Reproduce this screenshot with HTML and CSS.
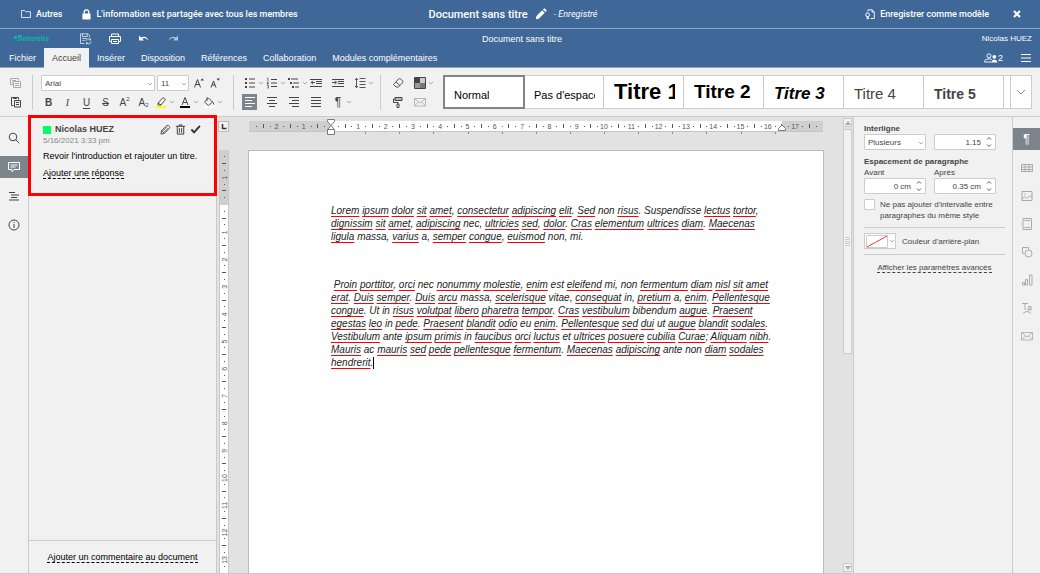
FILE: index.html
```html
<!DOCTYPE html>
<html lang="fr">
<head>
  <meta charset="UTF-8" />
  <meta name="viewport" content="width=device-width, initial-scale=1.0" />
  <title>Document sans titre</title>
  <link rel="stylesheet" href="styles.css">
</head>
<body>
  <!-- Icônes réutilisées -->
  <svg width="0" height="0" class="sprite" aria-hidden="true">
    <symbol id="caret" viewBox="0 0 6 6"><path d="M1 2l2 2 2-2" fill="none" stroke="#999" stroke-width="0.8"/></symbol>
    <symbol id="mail" viewBox="0 0 12 12"><path d="M.5 2.500h11v7.500H.5zM.5 2.500L6 7l5.500-4.500M.5 10l4-4.200M11.500 10l-4-4.200" fill="none" stroke="currentColor" stroke-width="0.8"/></symbol>
    <symbol id="spin" viewBox="0 0 6 12"><path d="M1 3.500L3 1.500l2 2M1 8.500l2 2 2-2" fill="none" stroke="#444" stroke-width="0.9"/></symbol>
  </svg>

  <!-- Barre de l'application -->
  <header class="topbar">
    <div class="topbar-left">
      <a href="#" class="top-link">
        <svg width="10" height="10" viewBox="0 0 10 10"><path d="M.5 8.500v-7h3l1 1.200h5v5.800z" fill="none" stroke="#fff" stroke-width="0.8"/></svg>
        Autres
      </a>
      <span class="top-info">
        <svg width="9" height="11" viewBox="0 0 9 11"><path d="M2.200 5V3.200a2.300 2.300 0 0 1 4.600 0V5" fill="none" stroke="#fff" stroke-width="1.300"/><rect x=".4" y="4.600" width="8.200" height="6" rx=".8" fill="#fff"/></svg>
        L'information est partagée avec tous les membres
      </span>
    </div>
    <div class="topbar-title">
      <h1>Document sans titre</h1>
      <button type="button" aria-label="Renommer">
        <svg width="12" height="12" viewBox="0 0 12 12"><path d="M.8 11.200l.5-3L7.200 2.300l2.500 2.500-5.900 5.900zM8 1.500l.9-.9q.5-.4 1 0l1.500 1.500q.4.500 0 1l-.9.900z" fill="#fff"/></svg>
      </button>
      <em>- Enregistré</em>
    </div>
    <div class="topbar-right">
      <button type="button" class="save-model">
        <svg width="10" height="11" viewBox="0 0 10 11"><path d="M3 2.500V.8h4L9.300 3v6.500H5.500M7 .8V3h2.300" fill="none" stroke="#fff" stroke-width="0.9"/><circle cx="2.600" cy="5.800" r="1.900" fill="none" stroke="#fff"/><path d="M1.700 7.500v3l1-.7 1 .7v-3" fill="#fff"/></svg>
        Enregistrer comme modèle
      </button>
      <button type="button" class="close" aria-label="Fermer">
        <svg width="8" height="8" viewBox="0 0 8 8"><path d="M1 1l6 6M7 1L1 7" stroke="#fff" stroke-width="2.100"/></svg>
      </button>
    </div>
  </header>

  <!-- En-tête de l'éditeur -->
  <div class="doc-header">
    <div class="doc-actions">
      <span class="logo">
        <svg width="9" height="8" viewBox="0 0 9 8"><path d="M0 3h2v3H0zM2 5h3v2H2z" fill="#1479b8"/><path d="M2 1h3v3H2zM6 0h3v3H6zM6 4h2v2H6z" fill="#12b3a4"/></svg>
        interstis
      </span>
      <button type="button" aria-label="Enregistrer">
        <svg width="12" height="12" viewBox="0 0 12 12" fill="none" stroke="#d4deea" stroke-width="0.9"><path d="M4.500 10.500h-4V.8h7.300l1.700 1.700v2M2.500.8v2.700h4.800V.8M2.500 5.500h4M2.500 7.500h2"/><path d="M6 8a2.300 2.300 0 0 1 4.300-1M11 8.500a2.300 2.300 0 0 1-4.300 1.200M10.500 5.300V7H9M6.500 11.500V9.800H8"/></svg>
      </button>
      <button type="button" aria-label="Imprimer">
        <svg width="12" height="12" viewBox="0 0 12 12" fill="none" stroke="#fff"><path d="M2.500 3.500v-2.500h7v2.500M2.500 8.500h-2v-5h11v5h-2"/><path d="M2.500 6.500h7v4h-7zM4 8.500h4"/></svg>
      </button>
      <button type="button" aria-label="Annuler">
        <svg width="12" height="12" viewBox="0 0 12 12"><path d="M1 2.500v5h5L4.200 5.700q3.300-2 6.300 2Q8.700 2.300 3 4.500z" fill="#fff"/></svg>
      </button>
      <button type="button" aria-label="Rétablir" class="dim">
        <svg width="12" height="12" viewBox="0 0 12 12"><path d="M11 2.500v5H6l1.800-1.800q-3.300-2-6.300 2Q3.300 2.300 9 4.500z" fill="#fff"/></svg>
      </button>
    </div>
    <div class="doc-name">Document sans titre</div>
    <div class="doc-user">Nicolas HUEZ</div>
  </div>

  <!-- Onglets -->
  <nav class="tabs">
    <button type="button">Fichier</button>
    <button type="button" class="active">Accueil</button>
    <button type="button">Insérer</button>
    <button type="button">Disposition</button>
    <button type="button">Références</button>
    <button type="button">Collaboration</button>
    <button type="button">Modules complémentaires</button>
    <div class="tabs-right">
      <button type="button" class="users">
        <svg width="14" height="10" viewBox="0 0 14 10"><circle cx="5" cy="2.800" r="2" fill="none" stroke="#fff" stroke-width="0.9"/><path d="M.5 9c0-2.500 2-3 4.500-3 1 0 2 .1 2.800.5M.5 9H8" fill="none" stroke="#fff" stroke-width="0.9"/><circle cx="10.300" cy="3.800" r="1.900" fill="#fff"/><path d="M7.800 9.400Q8 6.400 10.300 6.400T13.500 9.400z" fill="#fff"/></svg>2
      </button>
      <button type="button" class="menu" aria-label="Menu">
        <svg width="10" height="8" viewBox="0 0 10 8"><path d="M0 .5h10M0 4h10M0 7.500h10" stroke="#fff"/></svg>
      </button>
    </div>
  </nav>

  <!-- Barre d'outils -->
  <div class="toolbar">
    <div class="tool-group copy-group">
      <div class="tool-row"><button type="button" aria-label="Copier" class="disabled"><svg width="12" height="12" viewBox="0 0 12 12" fill="none" stroke="currentColor"><path d="M3.500 7.500h-3v-6h8v2M2 3.500h4M2 5.500h1"/><path d="M3.500 4.500h7v6h-7zM5 6.500h4M5 8.500h4"/></svg></button></div>
      <div class="tool-row"><button type="button" aria-label="Coller"><svg width="12" height="12" viewBox="0 0 12 12" fill="none" stroke="currentColor"><path d="M3.500 9.500h-2v-8h7v2M3.500 1.500v1h3v-1"/><path d="M4.500 4.500h6v6.500h-6zM6 6.500h3M6 8.500h3"/></svg></button></div>
    </div>

    <div class="tool-group font-group">
      <div class="tool-row font-row">
        <span class="combo font-name"><select aria-label="Police"><option>Arial</option></select><svg width="6" height="6"><use href="#caret"/></svg></span>
        <span class="combo font-size"><select aria-label="Taille"><option>11</option></select><svg width="6" height="6"><use href="#caret"/></svg></span>
        <button type="button" aria-label="Augmenter la taille"><svg width="12" height="12" viewBox="0 0 12 12" fill="none" stroke="currentColor"><path d="M1.500 10.500l3-8 3 8M2.500 7.500h4"/><path d="M7.500 3.500L9.200 1.200 11 3.500z" fill="currentColor" stroke="none"/></svg></button>
        <button type="button" aria-label="Réduire la taille"><svg width="12" height="12" viewBox="0 0 12 12" fill="none" stroke="currentColor"><path d="M2 10.500l2.500-6.500L7 10.500M3 8h3"/><path d="M7.500 1.500l1.700 2.200L11 1.500z" fill="currentColor" stroke="none"/></svg></button>
      </div>
      <div class="tool-row style-row">
        <button type="button" class="bold">B</button>
        <button type="button" class="italic">I</button>
        <button type="button" class="under">U</button>
        <button type="button" class="strike">S</button>
        <button type="button">A<sup>2</sup></button>
        <button type="button">A<sub>2</sub></button>
        <button type="button" class="split" aria-label="Surlignage"><svg width="12" height="12" viewBox="0 0 12 12"><path d="M3 7l5-5.500 2.500 2L6 9H3zM3 7l3 2" fill="none" stroke="#444" stroke-width="0.9"/><path d="M1 10h10v2H1z" fill="#ff0"/></svg><svg width="6" height="6"><use href="#caret"/></svg></button>
        <button type="button" class="split" aria-label="Couleur du texte"><svg width="12" height="12" viewBox="0 0 12 12"><path d="M3 9l3-7.500L9 9M4 6.500h4" fill="none" stroke="#444"/><path d="M1 10h10v2H1z"/></svg><svg width="6" height="6"><use href="#caret"/></svg></button>
        <button type="button" class="split" aria-label="Couleur de fond"><svg width="12" height="12" viewBox="0 0 12 12"><path d="M1.500 6l4-4L9.500 6l-4 3.500zM4 1v4M9.500 5.500l1.500 3" fill="none" stroke="#444" stroke-width="0.9"/><path d="M1 10h10v2H1z" fill="#fff"/></svg><svg width="6" height="6"><use href="#caret"/></svg></button>
      </div>
    </div>

    <div class="tool-group para-group">
      <div class="tool-row">
        <button type="button" class="split" aria-label="Puces"><svg width="12" height="12" viewBox="0 0 12 12"><path d="M1 1h2v2H1zM1 5h2v2H1zM1 9h2v2H1z" fill="#444"/><path d="M5 2h6M5 6h6M5 10h6" stroke="#444"/></svg><svg width="6" height="6"><use href="#caret"/></svg></button>
        <button type="button" class="split" aria-label="Numérotation"><svg width="12" height="12" viewBox="0 0 12 12" fill="none" stroke="#444"><path d="M5 2.500h6M5 6h6M5 9.500h6"/><path d="M1 1h1v3M.8 5h1.500v1.500H1V7h1.500M.8 8.500h1.700v2.500H.8" stroke-width="0.7"/></svg><svg width="6" height="6"><use href="#caret"/></svg></button>
        <button type="button" class="split" aria-label="Liste multiniveau"><svg width="12" height="12" viewBox="0 0 12 12"><path d="M0 1h2v2H0zM2 5h2v2H2zM4 9h2v2H4z" fill="#444"/><path d="M3 2h7M5 6h6M7 10h4" stroke="#444"/></svg><svg width="6" height="6"><use href="#caret"/></svg></button>
        <button type="button" aria-label="Réduire le retrait"><svg width="12" height="12" viewBox="0 0 12 12" fill="none" stroke="#444"><path d="M0 2.500h12M6 4.500h6M6 6.500h6M0 9.500h12M5 5.500H1M3 3.700L1.200 5.500 3 7.300"/></svg></button>
        <button type="button" aria-label="Augmenter le retrait"><svg width="12" height="12" viewBox="0 0 12 12" fill="none" stroke="#444"><path d="M0 2.500h12M6 4.500h6M6 6.500h6M0 9.500h12M0 5.500h4M3 3.700l1.800 1.800L3 7.300"/></svg></button>
        <button type="button" class="split" aria-label="Interligne"><svg width="12" height="12" viewBox="0 0 12 12" fill="none" stroke="#444" stroke-width="0.9"><path d="M5.500 1.500h6M5.500 4.500h6M5.500 7.500h6M5.500 10.500h6M2.500 1.500v9M1 3l1.500-1.700L4 3M1 9l1.500 1.700L4 9"/></svg><svg width="6" height="6"><use href="#caret"/></svg></button>
      </div>
      <div class="tool-row">
        <button type="button" class="pressed" aria-label="Aligner à gauche"><svg width="12" height="12" viewBox="0 0 12 12" stroke="#fff"><path d="M1 1.500h10M1 4.500h7M1 7.500h10M1 10.500h7"/></svg></button>
        <button type="button" aria-label="Centrer"><svg width="12" height="12" viewBox="0 0 12 12" stroke="#444"><path d="M1 1.500h10M3 4.500h6M1 7.500h10M3 10.500h6"/></svg></button>
        <button type="button" aria-label="Aligner à droite"><svg width="12" height="12" viewBox="0 0 12 12" stroke="#444"><path d="M1 1.500h10M4 4.500h7M1 7.500h10M4 10.500h7"/></svg></button>
        <button type="button" aria-label="Justifier"><svg width="12" height="12" viewBox="0 0 12 12" stroke="#444"><path d="M1 1.500h10M1 4.500h10M1 7.500h10M1 10.500h10"/></svg></button>
        <button type="button" class="split" aria-label="Caractères non imprimables"><span class="pilcrow">¶</span><svg width="6" height="6"><use href="#caret"/></svg></button>
      </div>
    </div>

    <div class="tool-group misc-group">
      <div class="tool-row">
        <button type="button" aria-label="Effacer le style"><svg width="12" height="12" viewBox="0 0 12 12" fill="none" stroke="#444" stroke-width="0.9"><path d="M1.500 7.500l5-5.500q1-.8 2 0l2 1.700q.8 1 0 2L6.500 10H4zM4 5l4 3.500"/></svg></button>
        <button type="button" class="split" aria-label="Jeu de couleurs"><svg width="12" height="12" viewBox="0 0 12 12"><path d="M1 1h5v5H1z" fill="#444"/><path d="M6 1h5v5H6z" fill="#ccc"/><path d="M1 6h5v5H1z" fill="#999"/><path d="M6 6h5v5H6z" fill="#777"/><path d="M.5.500h11v11H.5z" fill="none" stroke="#444"/></svg><svg width="6" height="6"><use href="#caret"/></svg></button>
      </div>
      <div class="tool-row">
        <button type="button" aria-label="Copier le style"><svg width="12" height="12" viewBox="0 0 12 12" fill="none" stroke="#444"><path d="M3 1.500h7v3H3z" fill="#bbb"/><path d="M3 3H1.500v3.500H6V8"/><path d="M5 8h2v3.500H5z"/></svg></button>
        <button type="button" class="disabled" aria-label="Publipostage"><svg width="12" height="12"><use href="#mail"/></svg></button>
      </div>
    </div>

    <div class="styles">
      <button type="button" class="style-normal selected"><span>Normal</span></button>
      <button type="button" class="style-normal"><span>Pas d'espace</span></button>
      <button type="button" class="style-t1"><span>Titre 1</span></button>
      <button type="button" class="style-t2"><span>Titre 2</span></button>
      <button type="button" class="style-t3"><span>Titre 3</span></button>
      <button type="button" class="style-t4"><span>Titre 4</span></button>
      <button type="button" class="style-t5"><span>Titre 5</span></button>
      <button type="button" class="styles-more" aria-label="Plus de styles"><svg width="10" height="6" viewBox="0 0 10 6"><path d="M1 1l4 4 4-4" fill="none" stroke="#888"/></svg></button>
    </div>
  </div>

  <main class="workspace">
    <!-- Menu latéral gauche -->
    <nav class="rail rail-left">
      <button type="button" aria-label="Rechercher"><svg width="12" height="12" viewBox="0 0 12 12" fill="none" stroke="#444"><circle cx="5" cy="5" r="3.800"/><path d="M7.800 7.800l3.400 3.400"/></svg></button>
      <button type="button" class="active" aria-label="Commentaires"><svg width="12" height="12" viewBox="0 0 12 12" fill="none" stroke="#fff"><path d="M.5 1.500h11v7H6L4 10.800V8.500H.5zM2.500 4h7M2.500 6h5"/></svg></button>
      <button type="button" aria-label="Navigation"><svg width="12" height="12" viewBox="0 0 12 12" stroke="#444"><path d="M1 2.500h6M3 5h8M3 7.500h6M1 10h10"/></svg></button>
      <button type="button" aria-label="À propos"><svg width="12" height="12" viewBox="0 0 12 12" fill="none" stroke="#444"><circle cx="6" cy="6" r="5"/><path d="M6 5v4M6 3v1"/></svg></button>
    </nav>

    <!-- Commentaires -->
    <aside class="comments">
      <article class="comment">
        <header>
          <span class="user-color"></span>
          <strong>Nicolas HUEZ</strong>
          <button type="button" aria-label="Modifier"><svg width="11" height="11" viewBox="0 0 12 12" fill="none" stroke="#333" stroke-width="0.9"><path d="M1 11l.7-3.700L7.300 1.700q2-1 3 1 .8 1.300-.3 2.300L4.700 10.300zM3 7.500l4.500-4.500M4.500 9l4.500-4.500M1.700 7.300l3 3"/></svg></button>
          <button type="button" aria-label="Supprimer"><svg width="11" height="11" viewBox="0 0 12 12" fill="none" stroke="#333"><path d="M1 2.500h10M4.500 2.500v-1.500h3v1.500M2.500 2.500v8.500h7V2.500M4.800 4.500v5M7.200 4.500v5"/></svg></button>
          <button type="button" aria-label="Résoudre"><svg width="11" height="11" viewBox="0 0 12 12"><path d="M1.500 6l3 3.200L10.800 2" fill="none" stroke="#333" stroke-width="2"/></svg></button>
        </header>
        <time>5/16/2021 3:33 pm</time>
        <p>Revoir l'introduction et rajouter un titre.</p>
        <a href="#" class="dashed">Ajouter une réponse</a>
      </article>
      <footer><a href="#" class="dashed">Ajouter un commentaire au document</a></footer>
    </aside>

    <!-- Zone du document -->
    <section class="editor">
      <div class="v-side">
        <button type="button" class="tab-stop" aria-label="Tabulation"><svg width="6" height="6" viewBox="0 0 6 6"><path d="M1.500 0v4.500H5.500" fill="none" stroke="#333" stroke-width="1.500"/></svg></button>
        <div class="v-ruler" id="v-ruler"></div>
      </div>
      <div class="canvas">
        <div class="h-ruler" id="h-ruler"></div>
        <article class="page">
          <p><u>Lorem</u> <u>ipsum</u> <u>dolor</u> <u>sit</u> <u>amet</u>, <u>consectetur</u> <u>adipiscing</u> <u>elit</u>. <u>Sed</u> non <u>risus</u>. Suspendisse <u>lectus</u> <u>tortor</u>,<br>
            <u>dignissim</u> <u>sit</u> <u>amet</u>, <u>adipiscing</u> nec, <u>ultricies</u> <u>sed</u>, <u>dolor</u>. <u>Cras</u> <u>elementum</u> <u>ultrices</u> <u>diam</u>. <u>Maecenas</u><br>
            <u>ligula</u> massa, <u>varius</u> a, <u>semper</u> <u>congue</u>, <u>euismod</u> non, mi.</p>
          <p>&nbsp;<u>Proin</u> <u>porttitor</u>, <u>orci</u> nec <u>nonummy</u> <u>molestie</u>, <u>enim</u> est <u>eleifend</u> mi, non <u>fermentum</u> <u>diam</u> <u>nisl</u> <u>sit</u> <u>amet</u><br>
            <u>erat</u>. <u>Duis</u> <u>semper</u>. <u>Duis</u> <u>arcu</u> massa, <u>scelerisque</u> vitae, <u>consequat</u> in, <u>pretium</u> a, <u>enim</u>. <u>Pellentesque</u><br>
            <u>congue</u>. Ut in <u>risus</u> <u>volutpat</u> <u>libero</u> <u>pharetra</u> <u>tempor</u>. <u>Cras</u> <u>vestibulum</u> bibendum <u>augue</u>. <u>Praesent</u><br>
            <u>egestas</u> <u>leo</u> in <u>pede</u>. <u>Praesent</u> <u>blandit</u> <u>odio</u> eu <u>enim</u>. <u>Pellentesque</u> <u>sed</u> <u>dui</u> ut <u>augue</u> <u>blandit</u> <u>sodales</u>.<br>
            <u>Vestibulum</u> ante <u>ipsum</u> <u>primis</u> in <u>faucibus</u> <u>orci</u> <u>luctus</u> et <u>ultrices</u> <u>posuere</u> <u>cubilia</u> <u>Curae</u>; <u>Aliquam</u> <u>nibh</u>.<br>
            <u>Mauris</u> ac <u>mauris</u> <u>sed</u> <u>pede</u> <u>pellentesque</u> <u>fermentum</u>. <u>Maecenas</u> <u>adipiscing</u> ante non <u>diam</u> <u>sodales</u><br>
            <u>hendrerit</u>.<span class="cursor"></span></p>
        </article>
      </div>
      <div class="scrollbar">
        <button type="button" aria-label="Haut"><svg width="6" height="4" viewBox="0 0 6 4"><path d="M3 0l3 4H0z" fill="#aaa"/></svg></button>
        <div class="track"><div class="thumb"></div></div>
        <button type="button" aria-label="Bas"><svg width="6" height="4" viewBox="0 0 6 4"><path d="M3 4l3-4H0z" fill="#aaa"/></svg></button>
      </div>
    </section>

    <!-- Paramètres du paragraphe -->
    <aside class="settings">
      <label class="heading" for="interligne">Interligne</label>
      <div class="fields">
        <span class="combo"><select id="interligne"><option>Plusieurs</option></select><svg width="6" height="6"><use href="#caret"/></svg></span>
        <span class="spinner"><input type="text" value="1.15" aria-label="Valeur de l'interligne"><svg width="6" height="12"><use href="#spin"/></svg></span>
      </div>
      <div class="heading spacing">Espacement de paragraphe</div>
      <div class="fields">
        <label for="avant">Avant</label>
        <label for="apres">Après</label>
        <span class="spinner"><input type="text" id="avant" value="0 cm"><svg width="6" height="12"><use href="#spin"/></svg></span>
        <span class="spinner"><input type="text" id="apres" value="0.35 cm"><svg width="6" height="12"><use href="#spin"/></svg></span>
      </div>
      <label class="check"><input type="checkbox"><span>Ne pas ajouter d'intervalle entre paragraphes du même style</span></label>
      <div class="back-color">
        <button type="button" id="fond" aria-label="Couleur d'arrière-plan"><svg width="22" height="13" viewBox="0 0 22 13"><path d="M.5.500h21v12H.5z" fill="#fff" stroke="#ccc"/><path d="M1 12L21 1" stroke="#f33"/></svg><svg width="6" height="6"><use href="#caret"/></svg></button>
        <label for="fond">Couleur d'arrière-plan</label>
      </div>
      <div class="advanced"><a href="#" class="dashed">Afficher les paramètres avancés</a></div>
    </aside>

    <!-- Menu latéral droit -->
    <nav class="rail rail-right">
      <button type="button" class="active pilcrow" aria-label="Paragraphe">¶</button>
      <button type="button" aria-label="Tableau"><svg width="12" height="12" viewBox="0 0 12 12"><path d="M.5 2.500h11v7H.5zM.5 5h11M.5 7.500h11M4 2.500v7M8 2.500v7"/></svg></button>
      <button type="button" aria-label="Image"><svg width="12" height="12" viewBox="0 0 12 12"><path d="M1 1.500h10v9H1zM1 8.500l3-2 2 2 3-3 2 2M3 4h1.500"/></svg></button>
      <button type="button" aria-label="En-tête"><svg width="12" height="12" viewBox="0 0 12 12"><path d="M2 .5h8.500v11H2zM3.500 2.500h5.500M3.500 9.500h5.500"/></svg></button>
      <button type="button" aria-label="Forme"><svg width="12" height="12" viewBox="0 0 12 12"><path d="M3.500 7.500h-2v-6h6v2"/><circle cx="7.500" cy="7.500" r="3.500"/></svg></button>
      <button type="button" aria-label="Graphique"><svg width="12" height="12" viewBox="0 0 12 12"><path d="M1.500 8.500h2v2.500h-2zM4.500 5.500h2v5.500h-2zM8.500 1h2.500v10H8.500z"/></svg></button>
      <button type="button" aria-label="Texte décoratif"><svg width="12" height="12" viewBox="0 0 12 12"><path d="M1 1.500h6M4 1.500V8M7 4.500h3V8H7V6.200h3M2 11.500Q6 7.500 10 11.500"/></svg></button>
      <button type="button" aria-label="Publipostage"><svg width="12" height="12"><use href="#mail"/></svg></button>
    </nav>
  </main>

  <script src="ruler.js"></script>
</body>
</html>
```

FILE: styles.css
```css
/* =========================================
   Variables
   ========================================= */
:root {
  --blue: #3f6798;
  --bg: #f1f1f1;
  --bg-canvas: #e2e2e2;
  --active: #7d858c;
  --border: #cbcbcb;
  --text: #444;
  --ui-font: "Liberation Sans", Arial, sans-serif;
  --app-font: Roboto, sans-serif;
}

* {
  box-sizing: border-box;
}
body {
  margin: 0;
  height: 100vh;
  display: flex;
  flex-direction: column;
  background: var(--bg);
  color: var(--text);
  font-family: var(--ui-font);
  font-size: 8px;
  overflow: hidden;
}
button {
  display: flex;
  align-items: center;
  justify-content: center;
  padding: 0;
  border: 0;
  background: none;
  color: inherit;
  font: inherit;
}
svg {
  flex: none;
}
.sprite {
  position: absolute;
}
a {
  color: inherit;
  text-decoration: none;
}

/* =========================================
   Barre de l'application
   ========================================= */
.topbar {
  display: grid;
  grid-template-columns: 1fr auto 1fr;
  align-items: center;
  height: 29px;
  padding-right: 14px;
  border-bottom: 1px solid #8ba4c2;
  background: var(--blue);
  color: #fff;
  font-family: var(--app-font);
  font-size: 9px;
  font-weight: 500;
  white-space: nowrap;
}
.topbar-left {
  display: flex;
  gap: 20px;
  padding-left: 21px;
}
.top-link,
.top-info,
.save-model {
  display: flex;
  align-items: center;
  gap: 5px;
}
.topbar-title {
  display: flex;
  align-items: center;
  gap: 7px;
}
.topbar-title h1 {
  margin: 0;
  font-size: 11px;
  font-weight: 500;
}
.topbar-title em {
  font-weight: 400;
}
.topbar-right {
  display: flex;
  justify-content: flex-end;
  gap: 19px;
}
.close {
  width: 18px;
}

/* =========================================
   En-tête et onglets
   ========================================= */
.doc-header {
  display: grid;
  grid-template-columns: 1fr auto 1fr;
  align-items: center;
  height: 19px;
  padding: 0 8px 0 12px;
  background: var(--blue);
  color: #fff;
}
.doc-actions {
  display: flex;
}
.doc-actions button {
  width: 29px;
}
.doc-actions .dim {
  opacity: 0.6;
}
.logo {
  display: flex;
  align-items: center;
  width: 59px;
  color: #12b3a4;
  font-family: Inter, sans-serif;
  font-size: 7px;
  font-weight: 700;
}
.doc-name {
  font-size: 9px;
}
.doc-user {
  text-align: right;
}
.tabs {
  display: flex;
  height: 20px;
  padding-left: 1px;
  background: var(--blue);
  border-bottom: 1px solid #8ba4c2;
  color: #fff;
  font-size: 9px;
}
.tabs > button {
  padding: 0 8px;
}
.tabs > .active {
  height: 20px;
  background: var(--bg);
  color: var(--text);
}
.tabs-right {
  display: flex;
  gap: 18px;
  margin-left: auto;
  padding-right: 9px;
}

/* =========================================
   Barre d'outils
   ========================================= */
.toolbar {
  display: flex;
  height: 49px;
  padding: 7px 8px 0;
  border-bottom: 1px solid var(--border);
}
.tool-group {
  display: flex;
  flex-direction: column;
  gap: 3px;
  height: 35px;
  border-right: 1px solid var(--border);
}
.tool-row {
  display: flex;
  height: 16px;
}
.tool-row button svg + svg,
.tool-row .pilcrow + svg {
  margin-left: 2px;
}
.disabled {
  color: #aaa;
}
.copy-group {
  width: 25px;
}
.copy-group button {
  width: 16px;
}
.font-group {
  width: 201px;
  padding-left: 6px;
}
.font-row {
  padding-left: 2px;
}
.font-row button {
  width: 16px;
}
.font-name {
  width: 114px;
  margin-right: 2px;
}
.font-size {
  width: 32px;
  margin-right: 2px;
}
.style-row button {
  width: 19px;
  font-size: 10px;
}
.style-row .split {
  width: 24px;
}
.style-row sup,
.style-row sub {
  font-size: 6px;
}
.style-row sup {
  padding-bottom: 7px;
}
.style-row sub {
  padding-top: 5px;
}
.bold {
  font-weight: 700;
}
.italic {
  font-family: "Liberation Serif", serif;
  font-style: italic;
}
.under {
  text-decoration: underline;
  text-underline-offset: 2px;
}
.strike {
  text-decoration: line-through;
}
.para-group {
  width: 147px;
  padding-left: 8px;
}
.para-group button,
.misc-group button {
  justify-content: flex-start;
  width: 22px;
  padding-left: 2px;
}
.para-group .pressed {
  width: 15px;
  margin-right: 7px;
  background: var(--active);
}
.misc-group {
  width: 62px;
  padding-left: 9px;
  border-right: 0;
}
.pilcrow {
  width: 12px;
  font-size: 12px;
  text-align: center;
}

/* Listes déroulantes et champs */
.combo,
.spinner {
  position: relative;
  display: block;
  height: 16px;
}
.combo select,
.spinner input {
  display: block;
  width: 100%;
  height: 16px;
  padding: 0 3px;
  border: 1px solid var(--border);
  border-radius: 1px;
  appearance: none;
  background: #fff;
  color: var(--text);
  font: inherit;
}
.combo svg {
  position: absolute;
  right: 2px;
  top: 6px;
}
.spinner input {
  padding-right: 14px;
  text-align: right;
}
.spinner svg {
  position: absolute;
  right: 4px;
  top: 2px;
}

/* Galerie de styles */
.styles {
  display: flex;
  flex: 1;
  min-width: 0;
  height: 34px;
  border: 1px solid var(--border);
  background: #fff;
  color: #000;
}
.styles button {
  flex: none;
  justify-content: flex-start;
  width: 80px;
  padding: 0 8px 0 10px;
  border-right: 1px solid var(--border);
  white-space: nowrap;
}
.styles span {
  overflow: hidden;
}
.styles .selected {
  outline: 2px solid #848484;
  outline-offset: -1px;
}
.styles .styles-more {
  width: 21px;
  margin-left: auto;
  padding: 0 5px;
  border-right: 0;
  border-left: 1px solid var(--border);
}
.styles .style-normal {
  padding-top: 6px;
  font-size: 11px;
}
.styles .style-t1 {
  font-size: 22px;
  font-weight: 700;
}
.styles .style-t2 {
  font-size: 19px;
  font-weight: 700;
}
.styles .style-t3 {
  padding-top: 3px;
  font-size: 17px;
  font-style: italic;
  font-weight: 700;
}
.styles .style-t4 {
  padding-top: 3px;
  font-size: 15px;
  color: #444;
}
.styles .style-t5 {
  padding-top: 3px;
  font-size: 14px;
  font-weight: 700;
  color: #444;
}

/* =========================================
   Espace de travail
   ========================================= */
.workspace {
  display: flex;
  flex: 1;
  min-height: 0;
  border-bottom: 1px solid var(--border);
}
.rail {
  display: flex;
  flex-direction: column;
  flex: none;
}
.rail button {
  height: 22px;
}
.rail .active {
  background: var(--active);
  color: #fff;
}
.rail-left {
  width: 29px;
  gap: 7px;
  padding-top: 10px;
  border-right: 1px solid var(--border);
}
.rail-right {
  width: 28px;
  gap: 6px;
  padding-top: 11px;
  border-left: 1px solid var(--border);
  color: #aaa;
}
.rail-right button {
  width: 100%;
}
.rail-right .active {
  margin-bottom: 1px;
}
.rail-right svg {
  fill: none;
  stroke: #aaa;
}

/* Commentaires */
.comments {
  display: flex;
  flex-direction: column;
  flex: none;
  width: 188px;
  border-right: 1px solid var(--border);
  color: #000;
  font-size: 9px;
}
.comment {
  position: relative;
  margin: -2px -1px auto;
  padding: 6px 13px 14px 12px;
  border: 3px solid #f00;
  line-height: 11px;
}
.comment header {
  display: flex;
  align-items: center;
  gap: 4px;
}
.comment header strong {
  margin-right: auto;
  color: var(--text);
}
.comment time {
  display: block;
  color: #888;
  font-size: 8px;
}
.comment p {
  margin: 5px 0 6px;
}
.user-color {
  width: 8px;
  height: 8px;
  background: #0f6;
}
.dashed {
  border-bottom: 1px dashed currentColor;
}
.comments footer {
  padding: 12px 0;
  border-top: 1px solid var(--border);
  line-height: 8px;
  text-align: center;
}

/* Document */
.editor {
  display: flex;
  flex: 1;
  min-width: 0;
  background: var(--bg-canvas);
  overflow: hidden;
}
.v-side {
  display: flex;
  flex-direction: column;
  width: 12px;
  padding: 4px 0 0 1px;
}
.tab-stop {
  flex: none;
  width: 11px;
  height: 11px;
  border: 1px solid #bbb;
  background: var(--bg);
}
.v-ruler {
  flex: 1;
  min-height: 0;
  width: 10px;
  margin: 18px 0 0 1px;
}
.canvas {
  display: flex;
  flex: 1;
  flex-direction: column;
  align-items: center;
}
.h-ruler {
  width: 574px;
  height: 18px;
  margin: 4px 0 11px;
}
.h-ruler svg,
.v-ruler svg {
  display: block;
  overflow: visible;
}
.page {
  flex: 1;
  width: 576px;
  padding: 53px 44px 0 82px;
  border: 1px solid #bbb;
  border-bottom: 0;
  background: #fff;
  color: #222;
  font-size: 10px;
  font-style: italic;
  line-height: 13px;
  white-space: nowrap;
}
.page p {
  margin: 0 0 35px;
}
.page u {
  text-decoration: underline 1px #f00;
  text-decoration-skip-ink: none;
  text-underline-offset: 2px;
}
.cursor {
  display: inline-block;
  height: 12px;
  border-left: 1px solid #000;
  vertical-align: middle;
}

/* Barre de défilement */
.scrollbar {
  display: flex;
  flex-direction: column;
  gap: 2px;
  width: 10px;
  padding: 1px 1px 1px 0;
}
.scrollbar button,
.thumb {
  width: 9px;
  border: 1px solid var(--border);
  background: var(--bg);
}
.scrollbar button {
  height: 9px;
}
.track {
  flex: 1;
}
.thumb {
  display: flex;
  align-items: center;
  justify-content: center;
  height: 52%;
}
.thumb::before {
  content: "";
  width: 5px;
  height: 9px;
  background: repeating-linear-gradient(#ccc 0 1px, transparent 1px 2px);
}

/* Paramètres du paragraphe */
.settings {
  flex: none;
  width: 159px;
  padding: 6px 7px 0 10px;
  border-left: 1px solid var(--border);
  line-height: 11px;
}
.heading {
  display: block;
  font-weight: 700;
}
.fields {
  display: grid;
  grid-template-columns: 62px 62px;
  column-gap: 8px;
}
.spacing {
  margin-top: 6px;
}
.check {
  display: flex;
  gap: 5px;
  margin-top: 5px;
}
.check input {
  flex: none;
  width: 11px;
  height: 11px;
  margin: 0;
  border: 1px solid var(--border);
  border-radius: 1px;
  appearance: none;
  background: #fff;
}
.back-color {
  display: flex;
  align-items: center;
  gap: 6px;
  margin-top: 6px;
  padding: 5px 0;
  border: 1px solid var(--border);
  border-width: 1px 0;
}
.back-color button {
  width: 32px;
  height: 16px;
  gap: 1px;
  border: 1px solid var(--border);
  background: #fff;
}
.advanced {
  margin-top: 7px;
  text-align: center;
}
```

FILE: ruler.js
```js
// Règles graduées : 1 cm = 27.3 px à ce niveau de zoom
const CM = 27.3;
const hRuler = document.getElementById('h-ruler');
const vRuler = document.getElementById('v-ruler');

// Graduations d'une règle, "zero" étant la position de la marge
function graduations(zero, longueur) {
  let svg = '';
  const premier = Math.ceil(-zero / CM * 4);
  for (let q = premier; zero + q * CM / 4 < longueur - 4; q++) {
    const x = zero + q * CM / 4;
    if (x < 4 || q === 0) continue;
    if (q % 4 === 0) {
      svg += `<text x="${x}" y="8" text-anchor="middle">${Math.abs(q / 4)}</text>`;
    } else {
      const h = q % 2 === 0 ? 4 : 1;
      svg += `<rect x="${Math.round(x)}" y="${5 - Math.floor(h / 2)}" width="1" height="${h}"/>`;
    }
  }
  return `<g fill="#555" font-size="7">${svg}</g>`;
}

// Règle horizontale
let onglets = '';
for (let x = 82 + CM * 1.25; x < 533; x += CM * 1.25) {
  onglets += `<rect x="${Math.round(x)}" y="11" width="1" height="2" fill="#888"/>`;
}
hRuler.innerHTML = `<svg width="574" height="18">
  <rect width="574" height="10" fill="#cfcfcf"/>
  <rect x="82" width="451" height="10" fill="#fff"/>
  <path d="M0 10.500h574" stroke="#c4c4c4"/>
  ${graduations(82, 574)}${onglets}
  <path d="M78.500-1.500h7v2l-3.500 4-3.500-4zM82 4.500l3.500 4v5h-7v-5zM78.500 8.500h7" fill="#fff" stroke="#778"/>
  <path d="M529.500 9.500v-2l3.500-3.500 3.500 3.500v2z" fill="#fff" stroke="#778"/>
</svg>`;

// Règle verticale, limitée à la hauteur visible
const hauteur = vRuler.clientHeight;
vRuler.innerHTML = `<svg width="10" height="${hauteur}">
  <rect width="10" height="${hauteur}" fill="#fff"/>
  <rect width="10" height="55" fill="#cfcfcf"/>
  <path d="M.5 0v${hauteur}M9.500 0v${hauteur}" stroke="#c8c8c8"/>
  <g transform="translate(0 ${hauteur}) rotate(-90)">${graduations(hauteur - 55, hauteur)}</g>
</svg>`;
```
